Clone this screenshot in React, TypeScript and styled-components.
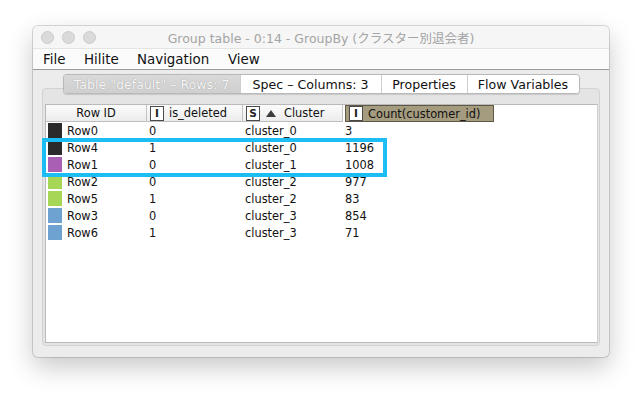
import React from "react";
import styled, { createGlobalStyle } from "styled-components";

const GlobalStyle = createGlobalStyle`
  html, body {
    margin: 0;
    padding: 0;
    background: #ffffff;
  }
  body {
    font-family: "DejaVu Sans", "Noto Sans CJK JP", sans-serif;
  }
`;

const Page = styled.div`
  width: 643px;
  height: 400px;
  box-sizing: border-box;
  padding: 26px 0 0 33px;
  background: #ffffff;
`;

const Window = styled.div`
  width: 576px;
  height: 331px;
  display: flex;
  flex-direction: column;
  border-radius: 5px;
  overflow: hidden;
  background: #ececec;
  box-shadow: 0 0 0 1px rgba(0, 0, 0, 0.14), 0 10px 26px rgba(0, 0, 0, 0.22);
`;

const TitleBar = styled.div`
  position: relative;
  height: 22px;
  display: flex;
  align-items: center;
  justify-content: center;
  background: #f6f6f6;
  border-bottom: 1px solid #e4e4e4;
`;

const Lights = styled.div`
  position: absolute;
  left: 8px;
  top: 5px;
  display: flex;
  gap: 8px;
`;

const Light = styled.span`
  width: 11px;
  height: 11px;
  border-radius: 50%;
  background: #dadada;
  border: 0.5px solid #cacaca;
`;

const Title = styled.div`
  font-size: 12.5px;
  color: #a4a4a4;
  white-space: nowrap;
`;

const MenuBar = styled.div`
  height: 20px;
  display: flex;
  align-items: center;
  padding-left: 10px;
  background: #fbfbfb;
  border-bottom: 1px solid #9c9c9c;
`;

const MenuItem = styled.span<{ $w: number }>`
  width: ${(p) => p.$w}px;
  font-size: 13.4px;
  color: #111;
`;

const Body = styled.div`
  flex: 1;
  display: flex;
  flex-direction: column;
  align-items: center;
  padding: 4px 9px 11px 9px;
`;

const TabBar = styled.div`
  position: relative;
  z-index: 1;
  display: flex;
  height: 18px;
  margin-bottom: -6px;
  border: 1px solid #b9b9b9;
  border-radius: 4px;
  background: #ffffff;
  overflow: hidden;
  box-shadow: 0 0.5px 1px rgba(0, 0, 0, 0.12);
`;

const Tab = styled.div<{ $w: number; $active?: boolean }>`
  width: ${(p) => p.$w}px;
  display: flex;
  align-items: center;
  justify-content: center;
  font-size: 12.6px;
  white-space: nowrap;
  border-left: ${(p) => (p.$active ? "none" : "1px solid #cfcfcf")};
  color: ${(p) => (p.$active ? "#f7f7f7" : "#111")};
  background: ${(p) =>
    p.$active ? "linear-gradient(#d9d9d9, #cfcfcf)" : "#ffffff"};
  text-shadow: ${(p) => (p.$active ? "0 0 1px #8f8f8f" : "none")};
`;

const Panel = styled.div`
  align-self: stretch;
  flex: 1;
  display: flex;
  border: 1px solid #d2d2d2;
  border-radius: 4px;
  background: #e4e4e4;
  padding: 15px 1px 2px 2px;
`;

const ScrollPane = styled.div`
  position: relative;
  flex: 1;
  background: #ffffff;
  border: 1px solid #b9b9b9;
  border-right-color: #d0d0d0;
`;

const HeaderRow = styled.div`
  display: flex;
  height: 17px;
`;

const HeaderCell = styled.div<{ $w: number; $center?: boolean; $hl?: boolean }>`
  width: ${(p) => p.$w}px;
  box-sizing: border-box;
  display: flex;
  align-items: center;
  justify-content: ${(p) => (p.$center ? "center" : "flex-start")};
  gap: 5px;
  padding-left: ${(p) => (p.$center ? 0 : 3)}px;
  font-size: 11.4px;
  color: #111;
  background: ${(p) =>
    p.$hl ? "#a59b7e" : "linear-gradient(#fbfbfb, #ececec)"};
  border: ${(p) => (p.$hl ? "1px solid #5f5844" : "none")};
  border-right: 1px solid ${(p) => (p.$hl ? "#5f5844" : "#c4c4c4")};
  border-bottom: 1px solid ${(p) => (p.$hl ? "#5f5844" : "#bdbdbd")};
  margin-left: ${(p) => (p.$hl ? 2 : 0)}px;
`;

const TypeBox = styled.span`
  width: 12px;
  height: 13px;
  display: flex;
  align-items: center;
  justify-content: center;
  background: #ffffff;
  border: 1px solid #4a4a4a;
  font-size: 10.5px;
  font-weight: bold;
  color: #222;
  line-height: 1;
`;

const SortArrow = styled.span`
  width: 0;
  height: 0;
  margin: 0 3px 0 1px;
  border-left: 5px solid transparent;
  border-right: 5px solid transparent;
  border-bottom: 7px solid #3c3c3c;
`;

const Row = styled.div`
  display: flex;
  height: 17px;
  align-items: center;
`;

const Cell = styled.div<{ $w: number }>`
  width: ${(p) => p.$w}px;
  box-sizing: border-box;
  display: flex;
  align-items: center;
  padding-left: 2px;
  font-size: 11.4px;
  color: #111;
`;

const Swatch = styled.span<{ $c: string }>`
  width: 14px;
  height: 15px;
  margin-right: 5px;
  background: ${(p) => p.$c};
`;

const Highlight = styled.div`
  position: absolute;
  left: -4px;
  top: 33px;
  width: 337px;
  height: 31px;
  border: 4px solid #1cbdf3;
  pointer-events: none;
`;

const cols = [101, 96, 100, 151];

const rows = [
  { id: "Row0", del: "0", cluster: "cluster_0", count: "3", color: "#2b2b2b" },
  { id: "Row4", del: "1", cluster: "cluster_0", count: "1196", color: "#2b2b2b" },
  { id: "Row1", del: "0", cluster: "cluster_1", count: "1008", color: "#a95fb4" },
  { id: "Row2", del: "0", cluster: "cluster_2", count: "977", color: "#a7d657" },
  { id: "Row5", del: "1", cluster: "cluster_2", count: "83", color: "#a7d657" },
  { id: "Row3", del: "0", cluster: "cluster_3", count: "854", color: "#6ea2d0" },
  { id: "Row6", del: "1", cluster: "cluster_3", count: "71", color: "#6ea2d0" },
];

export default function App() {
  return (
    <>
      <GlobalStyle />
      <Page>
        <Window>
          <TitleBar>
            <Lights>
              <Light />
              <Light />
              <Light />
            </Lights>
            <Title>Group table - 0:14 - GroupBy (クラスター別退会者)</Title>
          </TitleBar>
          <MenuBar>
            <MenuItem $w={41}>File</MenuItem>
            <MenuItem $w={53}>Hilite</MenuItem>
            <MenuItem $w={91}>Navigation</MenuItem>
            <MenuItem $w={40}>View</MenuItem>
          </MenuBar>
          <Body>
            <TabBar>
              <Tab $w={176} $active>
                Table "default" – Rows: 7
              </Tab>
              <Tab $w={140}>Spec – Columns: 3</Tab>
              <Tab $w={85}>Properties</Tab>
              <Tab $w={111}>Flow Variables</Tab>
            </TabBar>
            <Panel>
              <ScrollPane>
                <HeaderRow>
                  <HeaderCell $w={cols[0]} $center>
                    Row ID
                  </HeaderCell>
                  <HeaderCell $w={cols[1]}>
                    <TypeBox>I</TypeBox>
                    is_deleted
                  </HeaderCell>
                  <HeaderCell $w={cols[2]}>
                    <TypeBox>S</TypeBox>
                    <SortArrow />
                    Cluster
                  </HeaderCell>
                  <HeaderCell $w={cols[3] - 2} $hl>
                    <TypeBox>I</TypeBox>
                    Count(customer_id)
                  </HeaderCell>
                </HeaderRow>
                {rows.map((r) => (
                  <Row key={r.id}>
                    <Cell $w={cols[0]}>
                      <Swatch $c={r.color} />
                      {r.id}
                    </Cell>
                    <Cell $w={cols[1]}>{r.del}</Cell>
                    <Cell $w={cols[2]}>{r.cluster}</Cell>
                    <Cell $w={cols[3]}>{r.count}</Cell>
                  </Row>
                ))}
                <Highlight />
              </ScrollPane>
            </Panel>
          </Body>
        </Window>
      </Page>
    </>
  );
}
